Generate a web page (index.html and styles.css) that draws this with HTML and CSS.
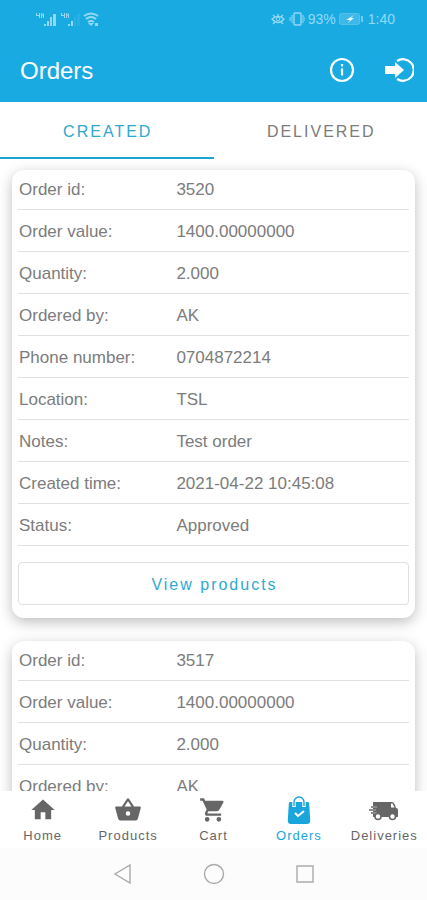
FILE: index.html
```html
<!DOCTYPE html>
<html lang="en">
<head>
<meta charset="utf-8">
<meta name="viewport" content="width=device-width, initial-scale=1">
<title>Orders</title>
<link rel="stylesheet" href="styles.css">
</head>
<body>
<header class="top">
  <div class="status">
    <svg class="status-icons" width="66" height="16" viewBox="0 0 66 16" fill="currentColor" aria-hidden="true">
      <path d="M0 2h1v2h2V2h1v5H3V5H0zM5 2h1v5H5zM6 4l2-2v5H7V5zM8 13h2v2H8zM11 10h2v5h-2zM14 6h2v9h-2zM17 3h3v12h-3z"/>
      <path d="M25 2h1v2h2V2h1v5h-1V5h-3zM30 2h1v5h-1zM31 4l2-2v5h-1V5zM32 13h2v2h-2zM35 10h2v5h-2z"/>
      <path d="M38 6h2v9h-2zM41 3h3v12h-3z" opacity=".15"/>
      <path d="M48 5q7-5 14 0M50 8q5-4 10 0M52 11q3-2 6 0" fill="none" stroke="currentColor" stroke-width="2"/>
      <path d="M52 12l3 3 3-3zM59 12h3v3h-3z"/>
    </svg>
    <div class="status-right">
      <svg width="34" height="16" viewBox="0 0 34 16" fill="none" stroke="currentColor" aria-hidden="true">
        <path d="M1 8q6-5 12 0-6 7-12 0zM2 4l2 2M7 3v3M12 4l-2 2M2 13l2-2M12 13l-2-2" stroke-width="1.3"/><circle cx="7" cy="8" r="1.8"/>
        <rect x="23" y="2" width="7" height="12" rx="1" stroke-width="1.4"/><path d="M21 4v8M32 4v8M19 6v4M34 6v4"/>
      </svg>
      <span>93%</span>
      <svg class="battery" width="24" height="12" viewBox="0 0 24 12" aria-hidden="true">
        <rect x=".5" y=".5" width="20" height="11" rx="2" fill="currentColor" fill-opacity=".3" stroke="currentColor" stroke-opacity=".4"/>
        <path d="M22 3h2v6h-2z" fill="currentColor" opacity=".7"/><path d="M15 2L7 7h4l-2 3 6-5h-3z" fill="#e4f7fd"/>
      </svg>
      <span>1:40</span>
    </div>
  </div>
  <div class="toolbar">
    <h1>Orders</h1>
    <div class="actions">
      <button class="icon-button" type="button" aria-label="Information">
        <svg width="26" height="26" viewBox="0 0 26 26" fill="none" stroke="currentColor" stroke-width="2.2"><circle cx="13" cy="13" r="11"/><path d="M13 11.500v7M13 7v2.500"/></svg>
      </button>
      <button class="icon-button" type="button" aria-label="Log out">
        <svg width="30" height="26" viewBox="0 0 30 26"><path d="M13 4A10.800 10.800 0 1 1 13 22" fill="none" stroke="currentColor" stroke-width="2.200"/><path d="M1 9h10V5l9 8-9 8v-4H1z" fill="currentColor"/></svg>
      </button>
    </div>
  </div>
</header>
<div class="tabs" role="tablist">
  <button class="tab tab-active" type="button" role="tab" aria-selected="true">CREATED</button>
  <button class="tab" type="button" role="tab" aria-selected="false">DELIVERED</button>
</div>
<main class="orders">
  <article class="card">
    <dl class="details">
      <div class="row"><dt>Order id:</dt><dd>3520</dd></div>
      <div class="row"><dt>Order value:</dt><dd>1400.00000000</dd></div>
      <div class="row"><dt>Quantity:</dt><dd>2.000</dd></div>
      <div class="row"><dt>Ordered by:</dt><dd>AK</dd></div>
      <div class="row"><dt>Phone number:</dt><dd>0704872214</dd></div>
      <div class="row"><dt>Location:</dt><dd>TSL</dd></div>
      <div class="row"><dt>Notes:</dt><dd>Test order</dd></div>
      <div class="row"><dt>Created time:</dt><dd>2021-04-22 10:45:08</dd></div>
      <div class="row"><dt>Status:</dt><dd>Approved</dd></div>
    </dl>
    <button class="view" type="button">View products</button>
  </article>
  <article class="card">
    <dl class="details">
      <div class="row"><dt>Order id:</dt><dd>3517</dd></div>
      <div class="row"><dt>Order value:</dt><dd>1400.00000000</dd></div>
      <div class="row"><dt>Quantity:</dt><dd>2.000</dd></div>
      <div class="row"><dt>Ordered by:</dt><dd>AK</dd></div>
    </dl>
  </article>
</main>
<nav class="nav">
  <a class="nav-item" href="#home">
    <svg width="28" height="28" viewBox="0 0 24 24" fill="currentColor" aria-hidden="true"><path d="M10 20v-6h4v6h5v-8h3L12 3 2 12h3v8z"/></svg>
    Home
  </a>
  <a class="nav-item" href="#products">
    <svg width="28" height="28" viewBox="0 0 24 24" fill="currentColor" aria-hidden="true"><path d="M17.210 9l-4.380-6.560a1 1 0 0 0-1.660 0L6.790 9H2c-.55 0-1 .45-1 1l.04.27 2.540 9.270A2 2 0 0 0 5.500 21h13a2 2 0 0 0 1.930-1.460l2.540-9.270L23 10c0-.55-.45-1-1-1zM9 9l3-4.400L15 9zm3 8a2 2 0 1 1 0-4 2 2 0 0 1 0 4z"/></svg>
    Products
  </a>
  <a class="nav-item" href="#cart">
    <svg width="28" height="28" viewBox="0 0 24 24" fill="currentColor" aria-hidden="true"><path d="M7 18a2 2 0 1 0 0 4 2 2 0 0 0 0-4zM1 2v2h2l3.600 7.590-1.350 2.450C4.520 15.370 5.480 17 7 17h12v-2H7.420l-.22-.37.900-1.630h7.450c.75 0 1.410-.41 1.750-1.030l3.580-6.490A1 1 0 0 0 20 4H5.210l-.94-2zm16 16a2 2 0 1 0 0 4 2 2 0 0 0 0-4z"/></svg>
    Cart
  </a>
  <a class="nav-item nav-active" href="#orders">
    <svg width="28" height="28" viewBox="0 0 28 28" aria-hidden="true"><path d="M5 6h18q1 0 1.200 2l1 16c.2 2.500-1 4-3 4H5.800c-2 0-3.200-1.500-3-4l1-16q.2-2 1.200-2z" fill="currentColor"/><path d="M9 11V6a5 5 0 0 1 10 0v5" fill="none" stroke="#fff" stroke-width="3.400"/><path d="M9 10V6a5 5 0 0 1 10 0v4" fill="none" stroke="currentColor" stroke-width="1.400"/><path d="M10 17l3 3 6-5" fill="none" stroke="#fff" stroke-width="2"/></svg>
    Orders
  </a>
  <a class="nav-item" href="#deliveries">
    <svg width="30" height="28" viewBox="0 0 30 28" aria-hidden="true"><path d="M4 6h16v15H4zM20 6h3q2 0 3 3l1 3q2 0 2 2v7h-9z" fill="currentColor"/><path d="M22 7.500h1.500l2 4H22z" fill="#fff"/><path d="M1 11h7M0 14h7M2 17h6" stroke="#fff" stroke-width="2"/><path d="M2 11h7M0 14h8M2 17h6" stroke="currentColor" stroke-width="1.300"/><circle cx="9" cy="20.500" r="3" fill="#fff" stroke="currentColor" stroke-width="1.600"/><circle cx="23.500" cy="20.500" r="3" fill="#fff" stroke="currentColor" stroke-width="1.600"/></svg>
    Deliveries
  </a>
</nav>
<div class="system">
  <button class="system-button" type="button" aria-label="Back"><svg width="22" height="22" viewBox="0 0 22 22"><path d="M18 2v18L3 11z"/></svg></button>
  <button class="system-button" type="button" aria-label="Home screen"><svg width="22" height="22" viewBox="0 0 22 22"><circle cx="11" cy="11" r="9.500"/></svg></button>
  <button class="system-button" type="button" aria-label="Recent apps"><svg width="22" height="22" viewBox="0 0 22 22"><path d="M3 3h16v16H3z"/></svg></button>
</div>
</body>
</html>
```
FILE: styles.css
```css
* {
  box-sizing: border-box;
}

body {
  margin: 0;
  height: 100vh;
  display: flex;
  flex-direction: column;
  background: #fff;
  color: #7c7c7c;
  font-family: "Liberation Sans", Arial, sans-serif;
  font-size: 17px;
}

button {
  border: 0;
  background: none;
  font: inherit;
  color: inherit;
  padding: 0;
}

svg {
  display: block;
}

.top {
  flex: none;
  background: #1aaae2;
  color: #fff;
}

.status {
  display: flex;
  justify-content: space-between;
  align-items: center;
  height: 37px;
  padding: 0 32px 0 36px;
  color: #93d9f4;
  font-size: 14px;
}

.status-right {
  display: flex;
  align-items: center;
  gap: 3px;
}

.battery {
  margin: 0 2px 0 0;
}

.toolbar {
  display: flex;
  justify-content: space-between;
  align-items: center;
  height: 65px;
  padding: 0 13px 0 20px;
}

h1 {
  margin: 0;
  padding-top: 2px;
  font-size: 24px;
  font-weight: 400;
}

.actions {
  display: flex;
  gap: 29px;
}

.tabs {
  flex: none;
  display: grid;
  grid-template-columns: 1fr 1fr;
  height: 57px;
}

.tab {
  padding: 4px 0 0 2px;
  border-bottom: 2px solid transparent;
  font-size: 16px;
  letter-spacing: 2px;
}

.tab-active {
  border-bottom-color: #1aa5d8;
  color: #2fa9cf;
}

.orders {
  flex: 1;
  min-height: 0;
  overflow: hidden;
  display: flex;
  flex-direction: column;
  gap: 23px;
  padding: 11px 12px 0;
}

.card {
  flex: none;
  padding: 0 6px 13px;
  border-radius: 12px;
  background: #fff;
  box-shadow: 0 4px 14px rgba(0, 0, 0, 0.26);
}

.details {
  margin: 0;
}

.row {
  display: grid;
  grid-template-columns: 2fr 3fr;
  align-items: center;
  height: 42px;
  padding-top: 2px;
  border-bottom: 1px solid #e0e0e0;
}

.row:first-child {
  height: 40px;
  padding-top: 0;
}

dd {
  margin: 0;
  padding-left: 2px;
}

dt {
  padding-left: 1px;
}

.view {
  display: block;
  width: 100%;
  height: 43px;
  margin-top: 16px;
  padding: 2px 0 0 2px;
  border: 1px solid #e0e0e0;
  border-radius: 4px;
  color: #2fa9cf;
  font-size: 16px;
  letter-spacing: 2px;
}

.nav {
  flex: none;
  display: grid;
  grid-template-columns: repeat(5, 1fr);
  height: 57px;
  background: #fff;
}

.nav-item {
  display: flex;
  flex-direction: column;
  align-items: center;
  gap: 4px;
  padding-top: 5px;
  color: #666;
  font-size: 13px;
  letter-spacing: 1px;
  text-decoration: none;
}

.nav-active {
  color: #1aa5dc;
}

.system {
  flex: none;
  display: flex;
  justify-content: center;
  align-items: center;
  gap: 69px;
  height: 52px;
  background: #fcfcfc;
}

.system-button svg {
  fill: none;
  stroke: #aaa;
  stroke-width: 1.4;
}
```
